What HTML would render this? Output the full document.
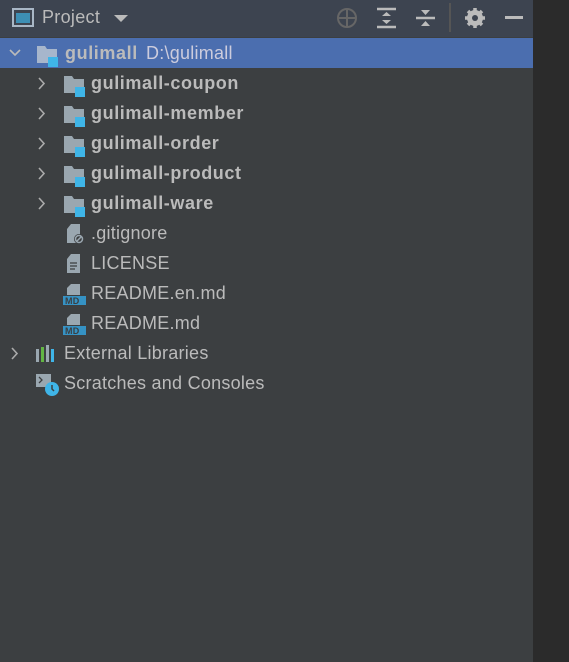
<!DOCTYPE html>
<html><head><style>
body{margin:0;width:569px;height:662px;background:#3c3f41;font-family:"Liberation Sans","DejaVu Sans",sans-serif;color:#bbbbbb;position:relative;overflow:hidden}
.right{position:absolute;left:533px;top:0;width:36px;height:662px;background:#2b2b2b}
.hdr{position:absolute;left:0;top:0;width:533px;height:37px;background:#3d4450}
.row{position:absolute;left:0;width:533px;height:30px;line-height:30px;font-size:18px;white-space:nowrap;letter-spacing:0.25px}
.sel{background:#4b6eaf}
.b{font-weight:bold;letter-spacing:0.6px}
.t{position:absolute;top:0}
svg{position:absolute}
</style></head><body>
<div class="right"></div>
<div class="hdr">
<svg style="left:12px;top:8px" width="22" height="20"><rect x="1" y="1" width="20" height="17" fill="none" stroke="#a9b7c6" stroke-width="2"/><rect x="4" y="5" width="14" height="10" fill="#3d8fb5"/></svg>
<span style="position:absolute;left:42px;top:7px;font-size:18px;color:#bbb;letter-spacing:0.3px">Project</span>
<svg style="left:114px;top:14px" width="14" height="9"><path d="M0 1 L14 1 L7 8Z" fill="#bbb"/></svg>
<svg style="left:336px;top:7px" width="22" height="22"><circle cx="11" cy="11" r="9" fill="none" stroke="#666" stroke-width="2"/><path d="M11 2V20M2 11H20" stroke="#666" stroke-width="2"/></svg>
<svg style="left:376px;top:7px" width="22" height="22"><path d="M1 2H20M1 20H20" stroke="#bbb" stroke-width="2.5"/><path d="M10.5 5L15 9H6Z M10.5 17L15 13H6Z" fill="#bbb"/></svg>
<svg style="left:415px;top:7px" width="22" height="22"><path d="M1 11H20" stroke="#bbb" stroke-width="2.5"/><path d="M10.5 8L15 3H6Z M10.5 14L15 19H6Z" fill="#bbb"/></svg>
<div style="position:absolute;left:449px;top:3px;width:2px;height:29px;background:#555"></div>
<svg style="left:464px;top:7px" width="22" height="22"><circle cx="11" cy="11" r="6" fill="none" stroke="#bbb" stroke-width="4"/><path d="M11 1V21M1 11H21M4 4L18 18M18 4L4 18" stroke="#bbb" stroke-width="3.5"/><circle cx="11" cy="11" r="3" fill="#3d4450"/></svg>
<div style="position:absolute;left:505px;top:16px;width:18px;height:3px;background:#bbb"></div>
</div>

<div class="row sel" style="top:38px">
<svg style="left:9px;top:11px" width="12" height="8"><path d="M1 1L6 6L11 1" stroke="#bbb" stroke-width="1.6" fill="none"/></svg>
<svg style="left:36px;top:7px" width="24" height="22"><path d="M1 1H9L11 4H21V18H1Z" fill="#a7b6cc"/><rect x="12" y="12" width="10" height="10" fill="#3fb5e8"/></svg>
<span class="t b" style="left:65px">gulimall</span><span class="t" style="left:146px;color:#ccd">D:\gulimall</span>
</div>

<div class="row" style="top:68px"><svg style="left:38px;top:9px" width="8" height="13"><path d="M1 1L6 6.5L1 12" stroke="#aaa" stroke-width="1.6" fill="none"/></svg><svg style="left:63px;top:7px" width="24" height="22"><path d="M1 1H9L11 4H21V18H1Z" fill="#9aa7b0"/><rect x="12" y="12" width="10" height="10" fill="#3fb5e8"/></svg><span class="t b" style="left:91px">gulimall-coupon</span></div>
<div class="row" style="top:98px"><svg style="left:38px;top:9px" width="8" height="13"><path d="M1 1L6 6.5L1 12" stroke="#aaa" stroke-width="1.6" fill="none"/></svg><svg style="left:63px;top:7px" width="24" height="22"><path d="M1 1H9L11 4H21V18H1Z" fill="#9aa7b0"/><rect x="12" y="12" width="10" height="10" fill="#3fb5e8"/></svg><span class="t b" style="left:91px">gulimall-member</span></div>
<div class="row" style="top:128px"><svg style="left:38px;top:9px" width="8" height="13"><path d="M1 1L6 6.5L1 12" stroke="#aaa" stroke-width="1.6" fill="none"/></svg><svg style="left:63px;top:7px" width="24" height="22"><path d="M1 1H9L11 4H21V18H1Z" fill="#9aa7b0"/><rect x="12" y="12" width="10" height="10" fill="#3fb5e8"/></svg><span class="t b" style="left:91px">gulimall-order</span></div>
<div class="row" style="top:158px"><svg style="left:38px;top:9px" width="8" height="13"><path d="M1 1L6 6.5L1 12" stroke="#aaa" stroke-width="1.6" fill="none"/></svg><svg style="left:63px;top:7px" width="24" height="22"><path d="M1 1H9L11 4H21V18H1Z" fill="#9aa7b0"/><rect x="12" y="12" width="10" height="10" fill="#3fb5e8"/></svg><span class="t b" style="left:91px">gulimall-product</span></div>
<div class="row" style="top:188px"><svg style="left:38px;top:9px" width="8" height="13"><path d="M1 1L6 6.5L1 12" stroke="#aaa" stroke-width="1.6" fill="none"/></svg><svg style="left:63px;top:7px" width="24" height="22"><path d="M1 1H9L11 4H21V18H1Z" fill="#9aa7b0"/><rect x="12" y="12" width="10" height="10" fill="#3fb5e8"/></svg><span class="t b" style="left:91px">gulimall-ware</span></div>

<div class="row" style="top:218px"><svg style="left:66px;top:5px" width="20" height="22"><path d="M5 1H14V20H1V6Z" fill="#9aa7b0"/><circle cx="13" cy="16" r="5" fill="#3c3f41"/><circle cx="13" cy="16" r="3.5" fill="none" stroke="#9aa7b0" stroke-width="1.5"/><path d="M10.5 18.5L15.5 13.5" stroke="#9aa7b0" stroke-width="1.5"/></svg><span class="t" style="left:91px">.gitignore</span></div>
<div class="row" style="top:248px"><svg style="left:66px;top:5px" width="20" height="22"><path d="M5 1H14V20H1V6Z" fill="#9aa7b0"/><path d="M4 10H11M4 13H11M4 16H9" stroke="#3c3f41" stroke-width="1.2"/></svg><span class="t" style="left:91px">LICENSE</span></div>
<div class="row" style="top:278px"><svg style="left:63px;top:5px" width="24" height="22"><path d="M8 1H17V12H4V5Z" fill="#9aa7b0"/><rect x="0" y="13" width="23" height="9" fill="#3592c4"/><text x="2" y="21" font-size="9" font-weight="bold" fill="#3c3f41" font-family="Liberation Sans">MD</text></svg><span class="t" style="left:91px">README.en.md</span></div>
<div class="row" style="top:308px"><svg style="left:63px;top:5px" width="24" height="22"><path d="M8 1H17V12H4V5Z" fill="#9aa7b0"/><rect x="0" y="13" width="23" height="9" fill="#3592c4"/><text x="2" y="21" font-size="9" font-weight="bold" fill="#3c3f41" font-family="Liberation Sans">MD</text></svg><span class="t" style="left:91px">README.md</span></div>

<div class="row" style="top:338px"><svg style="left:11px;top:9px" width="8" height="13"><path d="M1 1L6 6.5L1 12" stroke="#aaa" stroke-width="1.6" fill="none"/></svg><svg style="left:36px;top:7px" width="22" height="18"><rect x="0" y="4" width="3" height="13" fill="#9aa7b0"/><rect x="5" y="2" width="3" height="15" fill="#62b543"/><rect x="10" y="0" width="3" height="17" fill="#9aa7b0"/><rect x="15" y="4" width="3" height="13" fill="#3fb5e8"/></svg><span class="t" style="left:64px">External Libraries</span></div>
<div class="row" style="top:368px"><svg style="left:36px;top:5px" width="24" height="24"><rect x="0" y="1" width="15" height="13" fill="#9aa7b0"/><path d="M3 4L6 7L3 10" stroke="#3c3f41" stroke-width="1.3" fill="none"/><circle cx="16" cy="16" r="7" fill="#3fb5e8"/><path d="M16 12V16L18 18" stroke="#3c3f41" stroke-width="1.5" fill="none"/></svg><span class="t" style="left:64px">Scratches and Consoles</span></div>
</body></html>
